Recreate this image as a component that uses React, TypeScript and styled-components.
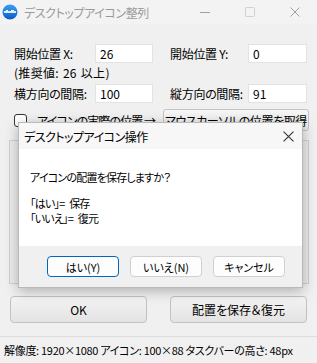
import React from "react";
import styled, { createGlobalStyle } from "styled-components";

const GlobalStyle = createGlobalStyle`
  html, body {
    margin: 0;
    padding: 0;
  }
  body {
    width: 317px;
    height: 363px;
    overflow: hidden;
    background: #f0f0f0;
    font-family: "Noto Sans CJK JP", "Noto Sans", sans-serif;
    font-size: 12px;
    color: #000;
    font-feature-settings: "palt";
  }
`;

const Window = styled.div`
  position: relative;
  width: 317px;
  height: 363px;
  display: flex;
  flex-direction: column;
  background: #f0f0f0;
`;

const TitleBar = styled.div`
  height: 24px;
  display: flex;
  align-items: center;
  background: #f3f3f3;
  padding-left: 2px;
`;

const TitleText = styled.span`
  color: #9b9b9b;
  font-size: 12px;
  letter-spacing: -0.4px;
  margin-left: 6px;
`;

const CaptionButtons = styled.div`
  margin-left: auto;
  display: flex;
`;

const CaptionButton = styled.div`
  width: 45px;
  height: 24px;
  display: flex;
  align-items: center;
  justify-content: center;
`;

const Body = styled.div`
  display: flex;
  flex-direction: column;
  padding: 20px 8px 0 9px;
`;

const FieldRow = styled.div<{ $top: number }>`
  display: grid;
  grid-template-columns: 81px 58px 95px 59px;
  align-items: center;
  height: 19px;
  margin: ${(p) => p.$top}px 0 0 5px;

  & > :nth-child(3) {
    margin-left: 17px;
  }
`;

const Label = styled.span`
  white-space: nowrap;
  line-height: 19px;
  letter-spacing: -0.3px;
`;

const Hint = styled.div`
  margin: 2px 0 0 5px;
  height: 16px;
  line-height: 16px;
  letter-spacing: 0.3px;
  word-spacing: 1px;
`;

const TextBox = styled.div`
  height: 19px;
  box-sizing: border-box;
  background: #fff;
  border: 1px solid #e3e3e3;
  padding-left: 4px;
  line-height: 17px;
`;

const PickRow = styled.div`
  display: flex;
  align-items: center;
  height: 22px;
  margin: 6px 0 0 5px;
`;

const CheckBox = styled.div`
  width: 13px;
  height: 13px;
  box-sizing: border-box;
  border: 1px solid #333;
  border-radius: 3px;
  background: #fff;
`;

const CheckLabel = styled.span`
  margin-left: 10px;
  white-space: nowrap;
  letter-spacing: -0.9px;
`;

const PickButton = styled.div`
  margin-left: auto;
  width: 146px;
  height: 22px;
  box-sizing: border-box;
  border: 1px solid #c4c4c4;
  border-radius: 3px;
  background: linear-gradient(#f6f6f6, #e9e9e9);
  display: flex;
  align-items: center;
  justify-content: center;
  white-space: nowrap;
  letter-spacing: -0.4px;
`;

const GroupBox = styled.div`
  margin-top: 9px;
  height: 144px;
  box-sizing: border-box;
  border: 1px solid #d0d0d0;
  background: #ececec;
`;

const ActionRow = styled.div`
  display: flex;
  justify-content: space-between;
  margin: 12px 2px 0 1px;
`;

const ActionButton = styled.div`
  width: 137px;
  height: 27px;
  box-sizing: border-box;
  border: 1px solid #c2c2c2;
  border-radius: 4px;
  background: linear-gradient(#f4f4f4, #e3e3e3);
  display: flex;
  align-items: center;
  justify-content: center;
  font-size: 12px;
`;

const StatusBar = styled.div`
  margin-top: auto;
  height: 27px;
  box-sizing: border-box;
  border-top: 1px solid #dcdcdc;
  background: #f0f0f0;
  display: flex;
  align-items: center;
  padding-left: 4px;
  white-space: nowrap;
  font-size: 11px;
  letter-spacing: -0.3px;
`;

/* message box lying over the main window */
const Dialog = styled.div`
  position: absolute;
  left: 18px;
  top: 122px;
  width: 285px;
  height: 166px;
  box-sizing: border-box;
  border: 1px solid #b9b9b9;
  background: #f0f0f0;
  box-shadow: 0 3px 12px rgba(0, 0, 0, 0.28);
  display: flex;
  flex-direction: column;
  font-size: 11px;
`;

const DialogTitle = styled.div`
  height: 26px;
  display: flex;
  align-items: center;
  justify-content: space-between;
  padding: 0 8px 0 5px;
  background: #f7f7f7;
  font-size: 12px;
  letter-spacing: -0.5px;
`;

const DialogContent = styled.div`
  background: #fff;
  height: 97px;
  padding: 21px 0 0 11px;
  box-sizing: border-box;
  line-height: 15px;
  letter-spacing: -0.8px;
  word-spacing: 3px;
`;

const Message = styled.div`
  margin-bottom: 11px;
`;

const DialogButtons = styled.div`
  display: flex;
  gap: 11px;
  padding: 10px 0 0 28px;
`;

const DialogButton = styled.div<{ $focused?: boolean }>`
  width: 72px;
  height: 21px;
  box-sizing: border-box;
  border: ${(p) => (p.$focused ? "1.5px solid #0067c0" : "1px solid #d0d0d0")};
  border-radius: 4px;
  background: #fdfdfd;
  display: flex;
  align-items: center;
  justify-content: center;
  font-size: 11px;
`;

const AppIcon = () => (
  <svg width="16" height="16" viewBox="0 0 16 16">
    <defs>
      <linearGradient id="ig" x1="0" y1="0" x2="0" y2="1">
        <stop offset="0" stopColor="#3aa0f5" />
        <stop offset="1" stopColor="#0a5cc8" />
      </linearGradient>
    </defs>
    <circle cx="8" cy="8" r="7.5" fill="url(#ig)" />
    <rect x="2" y="7" width="12" height="2" fill="#fff" opacity="0.85" />
    <rect x="4" y="6" width="2" height="1" fill="#fff" />
    <rect x="9" y="6" width="3" height="1" fill="#fff" />
  </svg>
);

const CloseGlyph = ({ color, size }: { color: string; size: number }) => (
  <svg width={size} height={size} viewBox="0 0 10 10">
    <path d="M0.5 0.5 L9.5 9.5 M9.5 0.5 L0.5 9.5" stroke={color} strokeWidth="1" />
  </svg>
);

export default function App() {
  return (
    <>
      <GlobalStyle />
      <Window>
        <TitleBar>
          <AppIcon />
          <TitleText>デスクトップアイコン整列</TitleText>
          <CaptionButtons>
            <CaptionButton>
              <svg width="10" height="10" viewBox="0 0 10 10">
                <path d="M0 5.5 H10" stroke="#a0a0a0" strokeWidth="1" />
              </svg>
            </CaptionButton>
            <CaptionButton>
              <svg width="10" height="10" viewBox="0 0 10 10">
                <rect x="0.5" y="0.5" width="9" height="9" rx="1" fill="none" stroke="#d0d0d0" strokeWidth="1" />
              </svg>
            </CaptionButton>
            <CaptionButton>
              <CloseGlyph color="#a0a0a0" size={10} />
            </CaptionButton>
          </CaptionButtons>
        </TitleBar>

        <Body>
          <FieldRow $top={0}>
            <Label>開始位置 X:</Label>
            <TextBox>26</TextBox>
            <Label>開始位置 Y:</Label>
            <TextBox>0</TextBox>
          </FieldRow>
          <Hint>(推奨値: 26 以上)</Hint>
          <FieldRow $top={3}>
            <Label>横方向の間隔:</Label>
            <TextBox>100</TextBox>
            <Label>縦方向の間隔:</Label>
            <TextBox>91</TextBox>
          </FieldRow>
          <PickRow>
            <CheckBox />
            <CheckLabel>アイコンの実際の位置 →</CheckLabel>
            <PickButton>マウスカーソルの位置を取得</PickButton>
          </PickRow>
          <GroupBox />
          <ActionRow>
            <ActionButton>OK</ActionButton>
            <ActionButton>配置を保存＆復元</ActionButton>
          </ActionRow>
        </Body>

        <StatusBar>解像度: 1920×1080 アイコン: 100×88 タスクバーの高さ: 48px</StatusBar>

        <Dialog>
          <DialogTitle>
            <span>デスクトップアイコン操作</span>
            <CloseGlyph color="#333" size={11} />
          </DialogTitle>
          <DialogContent>
            <Message>アイコンの配置を保存しますか？</Message>
            <div>「はい」= 保存</div>
            <div>「いいえ」= 復元</div>
          </DialogContent>
          <DialogButtons>
            <DialogButton $focused>はい(Y)</DialogButton>
            <DialogButton>いいえ(N)</DialogButton>
            <DialogButton>キャンセル</DialogButton>
          </DialogButtons>
        </Dialog>
      </Window>
    </>
  );
}
